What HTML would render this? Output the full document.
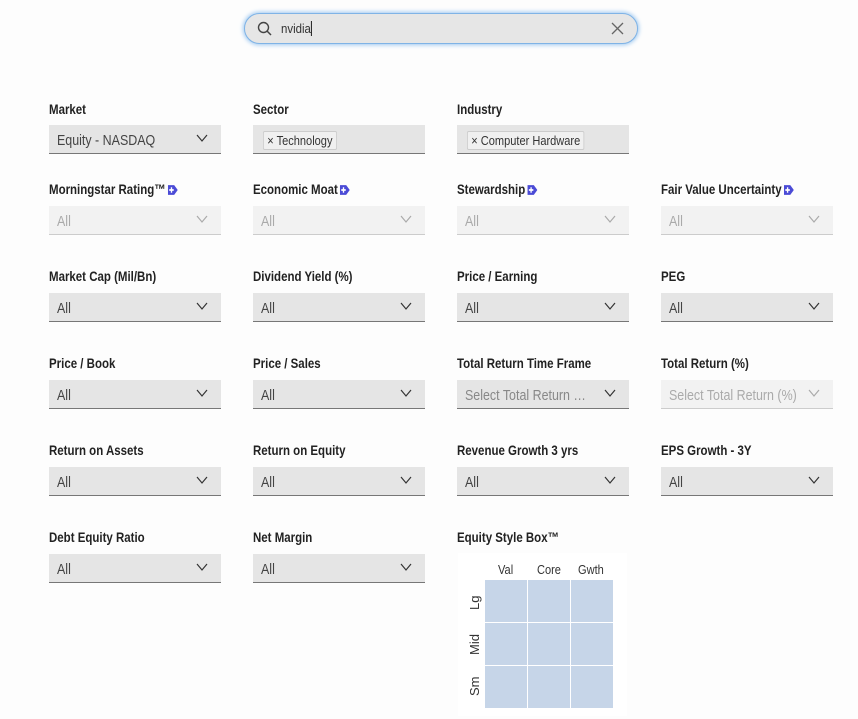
<!DOCTYPE html><html><head><meta charset="utf-8"><style>
body{margin:0;width:858px;height:719px;background:#fdfdfd;position:relative;overflow:hidden;font-family:"Liberation Sans Narrow","Liberation Sans",sans-serif;}
.l{position:absolute;font-size:14px;font-weight:bold;color:#222;line-height:14px;white-space:nowrap;transform:scaleX(0.82);transform-origin:0 0}
.s{position:absolute;width:172px;height:28px;background:#e5e5e5;border-bottom:1px solid #777;font-size:15px;color:#444;line-height:32px;box-sizing:content-box}
.s span{position:absolute;left:8px;top:0;white-space:nowrap;transform:scaleX(0.83);transform-origin:0 0}
.s svg{position:absolute;right:13px;top:9px}
.d{background:#f2f2f2;border-bottom-color:#ccc;color:#aaa}
.p{color:#888}
.tag{position:absolute;left:10px;top:6px;height:17px;border:1px solid #ccc;background:#f0f0f0;font-size:13px;line-height:17px;padding:0 4px;color:#333;border-radius:2px;transform:scaleX(0.85);transform-origin:0 0}
.ic{display:inline-block;width:12px;height:10px;vertical-align:-1px;margin-left:3px}
.cell{position:absolute;width:42px;height:42px;background:#c6d5e8}
.h{position:absolute;font-size:13px;color:#333;transform-origin:0 0}
</style></head><body>
<div style="position:absolute;left:244px;top:13px;width:392px;height:29px;border-radius:16px;background:#e6e6e6;border:1px solid #7fb3e6;box-shadow:0 0 4px 1px #9cc7f0"></div>
<svg style="position:absolute;left:257px;top:21px" width="16" height="16" viewBox="0 0 16 16"><circle cx="6.5" cy="6.5" r="5" fill="none" stroke="#444" stroke-width="1.4"/><line x1="10" y1="10" x2="14" y2="14" stroke="#444" stroke-width="1.5"/></svg>
<div style="position:absolute;left:281px;top:21px;font-size:13px;color:#333;line-height:16px;transform:scaleX(0.88);transform-origin:0 0">nvidia<span style="display:inline-block;width:1px;height:15px;background:#000;vertical-align:-3px"></span></div>
<svg style="position:absolute;left:611px;top:22px" width="13" height="13"><path d="M1 1L12 12M12 1L1 12" stroke="#666" stroke-width="1.3"/></svg>

<div id="c"></div>
<script>
var cols=[49,253,457,661];
var rows=[
[["Market","Equity - NASDAQ",""],["Sector","",""],["Industry","",""],null],
[["Morningstar Rating™","All","d",1],["Economic Moat","All","d",1],["Stewardship","All","d",1],["Fair Value Uncertainty","All","d",1]],
[["Market Cap (Mil/Bn)","All",""],["Dividend Yield (%)","All",""],["Price / Earning","All",""],["PEG","All",""]],
[["Price / Book","All",""],["Price / Sales","All",""],["Total Return Time Frame","Select Total Return …","p"],["Total Return (%)","Select Total Return (%)","d"]],
[["Return on Assets","All",""],["Return on Equity","All",""],["Revenue Growth 3 yrs","All",""],["EPS Growth - 3Y","All",""]],
[["Debt Equity Ratio","All",""],["Net Margin","All",""],null,null]];
var lc=[109,189,276,363,450,537],bt=[125,206,293,380,467,554];
var h="";
rows.forEach(function(r,i){r.forEach(function(c,j){if(!c)return;var x=cols[j];
h+='<div class="l" style="left:'+x+'px;top:'+(lc[i]-7)+'px">'+c[0]+(c[3]?'<svg class="ic" viewBox="0 0 11 9"><path d="M0 0H7L11 4.5L7 9H0Z" fill="#4b4bd6"/><path d="M4 2V7M1.5 4.5H6.5" stroke="#fff" stroke-width="1.5"/></svg>':'')+'</div>';
var cls='s '+(c[2]=='d'?'d':c[2]=='p'?'p':'');
var arrow=(i==0&&j>0)?'':'<svg width="12" height="9"><path d="M1 1L6 7L11 1" fill="none" stroke="'+(c[2]=='d'?'#aaa':'#333')+'" stroke-width="1.2"/></svg>';
var inner=c[1]?'<span>'+c[1]+'</span>':'';
if(i==0&&j==1)inner='<div class="tag">× Technology</div>';
if(i==0&&j==2)inner='<div class="tag">× Computer Hardware</div>';
h+='<div class="'+cls+'" style="left:'+x+'px;top:'+bt[i]+'px">'+inner+arrow+'</div>';});});
document.getElementById('c').innerHTML=h;
</script>
<div class="l" style="left:457px;top:530px">Equity Style Box™</div>
<div style="position:absolute;left:458px;top:553px;width:169px;height:163px;background:#fff"></div>
<div class="h" style="left:498px;top:562px;transform:scaleX(.85)">Val</div>
<div class="h" style="left:537px;top:562px;transform:scaleX(.85)">Core</div>
<div class="h" style="left:578px;top:562px;transform:scaleX(.85)">Gwth</div>
<div class="h" style="left:467px;top:594px;transform:rotate(-90deg) translateX(-16px)">Lg</div>
<div class="h" style="left:467px;top:637px;transform:rotate(-90deg) translateX(-18px)">Mid</div>
<div class="h" style="left:467px;top:680px;transform:rotate(-90deg) translateX(-16px)">Sm</div>
<div class="cell" style="left:485px;top:580px"></div><div class="cell" style="left:528px;top:580px"></div><div class="cell" style="left:571px;top:580px"></div>
<div class="cell" style="left:485px;top:623px"></div><div class="cell" style="left:528px;top:623px"></div><div class="cell" style="left:571px;top:623px"></div>
<div class="cell" style="left:485px;top:666px"></div><div class="cell" style="left:528px;top:666px"></div><div class="cell" style="left:571px;top:666px"></div>
</body></html>
